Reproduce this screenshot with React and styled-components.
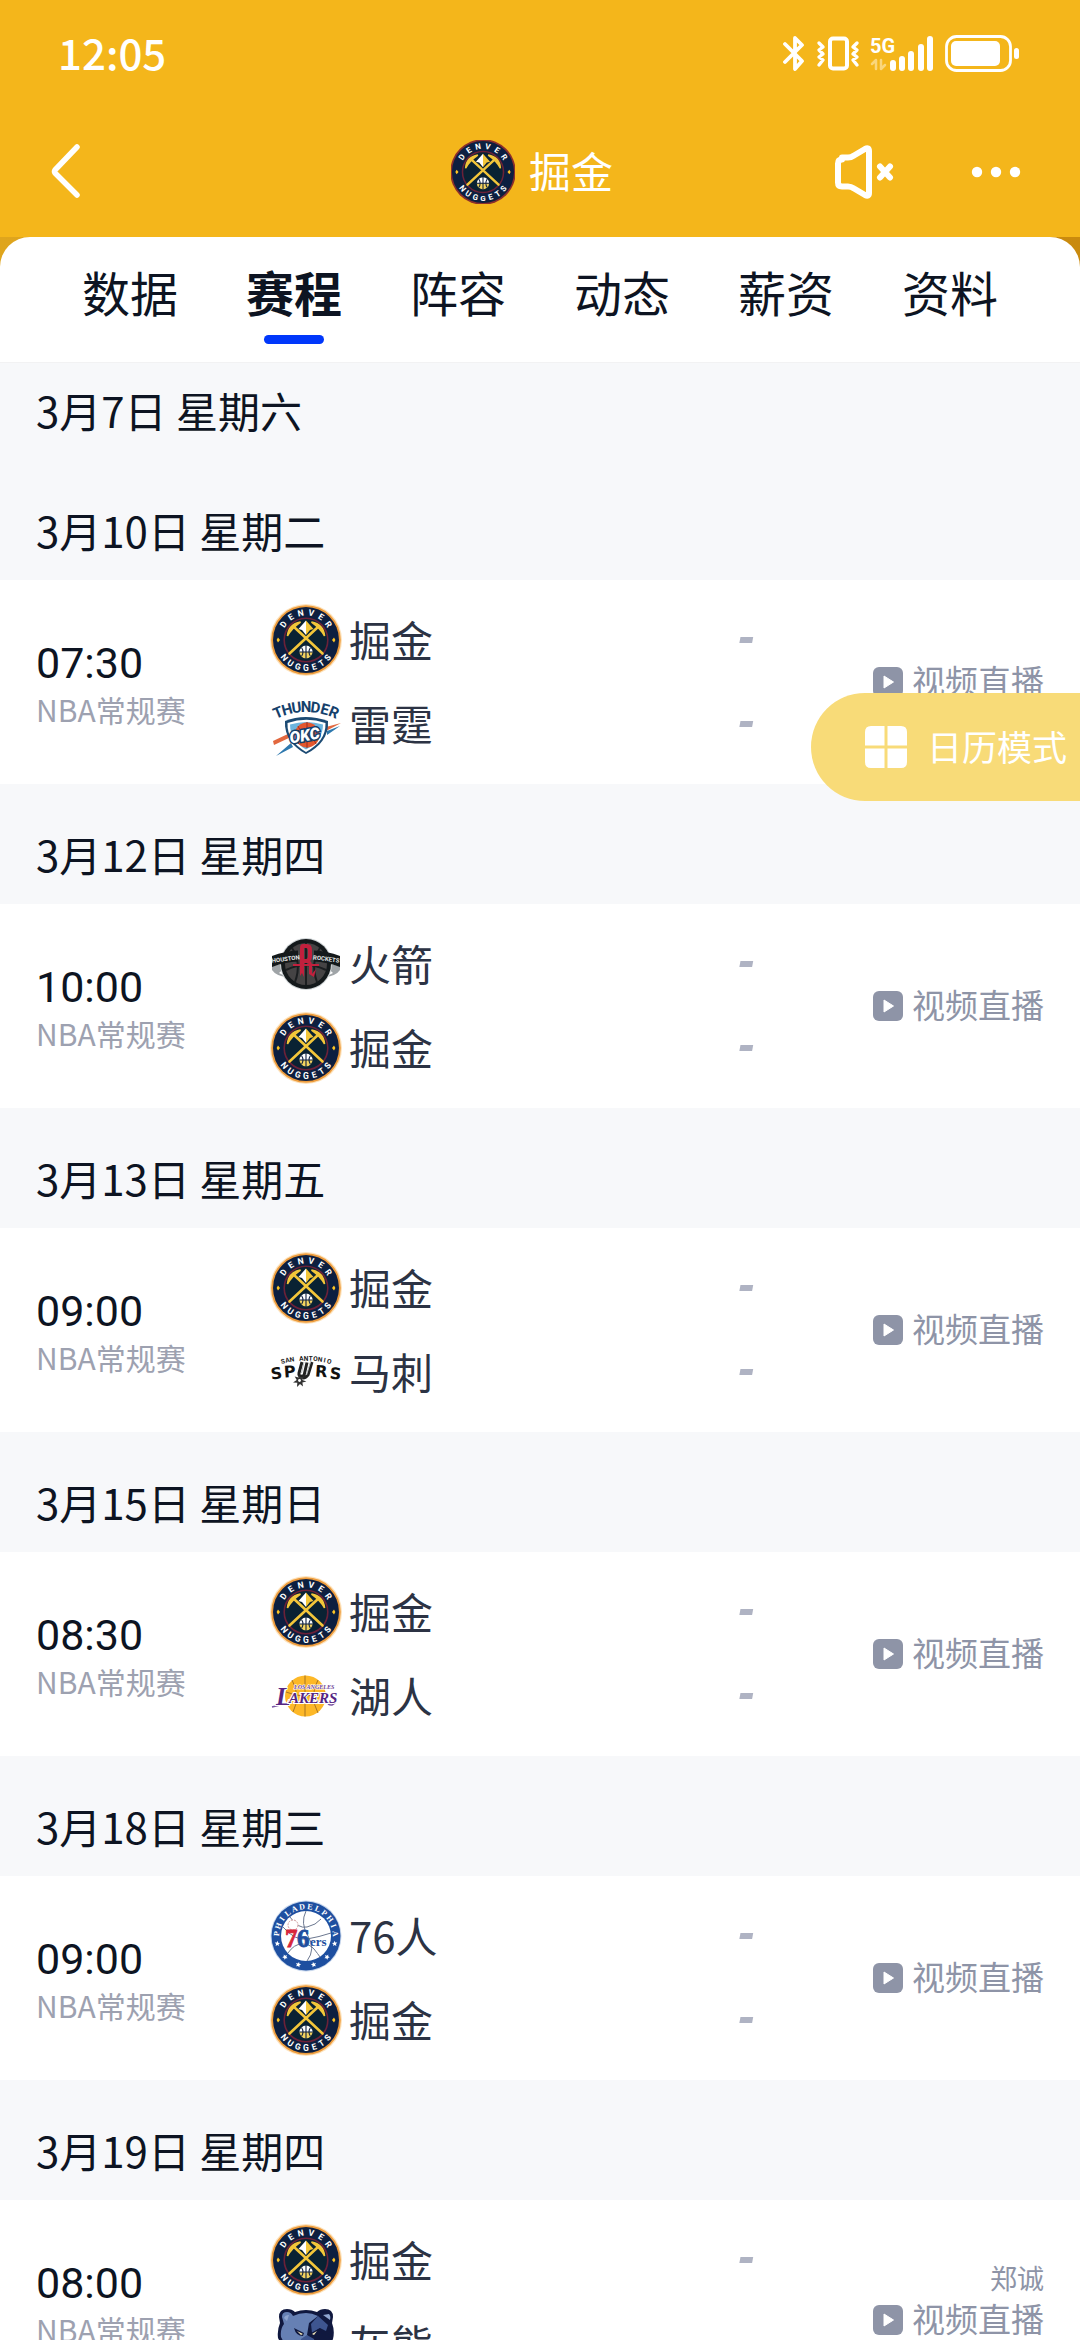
import * as React from "react";
import styled, { createGlobalStyle } from "styled-components";

const GlobalStyle = createGlobalStyle`
  * {
    box-sizing: border-box;
  }
  body {
    margin: 0;
    background: #f7f8fa;
    color: #0d1422;
    font-family: "Noto Sans CJK SC", "Noto Sans", sans-serif;
  }
  button {
    border: 0;
    padding: 0;
    background: none;
    color: inherit;
    font: inherit;
    cursor: pointer;
  }
  svg {
    display: block;
    flex-shrink: 0;
  }
`;

const Screen = styled.div`
  display: flex;
  flex-direction: column;
  height: 100vh;
  overflow: hidden;
`;

const Header = styled.header`
  background: #f4b61b;
  color: #fff;
`;

const StatusBar = styled.div`
  display: flex;
  align-items: center;
  justify-content: space-between;
  height: 106px;
  padding: 0 59px 0 58px;
  font-size: 42px;
  font-weight: 500;
`;

const NavBar = styled.div`
  display: grid;
  grid-template-columns: 1fr auto 1fr;
  align-items: center;
  height: 131px;
  padding: 0 54px 0 46px;
`;

const BackButton = styled.button`
  justify-self: start;
`;

const TeamTitle = styled.h1`
  display: flex;
  align-items: center;
  gap: 14px;
  margin: 0 8px 0 0;
  font-size: 42px;
  line-height: 60px;
  font-weight: 400;
`;

// CJK glyphs sit low in their line box, the padding brings them level with the icon beside
const Label = styled.span`
  padding-bottom: 4px;
`;

const NavActions = styled.div`
  display: flex;
  align-items: center;
  justify-self: end;
  gap: 72px;
`;

const SheetEdge = styled.div`
  background: linear-gradient(90deg, #dfa51d, #c98a0e);
`;

const Tabs = styled.nav`
  display: flex;
  height: 126px;
  padding: 18px 48px 0;
  background: #fff;
  border-bottom: 1px solid #f2f2f3;
  border-radius: 30px 30px 0 0;
`;

const Tab = styled.button`
  display: flex;
  flex: 1;
  flex-direction: column;
  align-items: center;
  gap: 8px;
  font-size: 48px;
  line-height: 72px;
  font-weight: ${(props) => (props.$active ? 700 : 400)};

  &::after {
    content: "";
    width: 60px;
    height: 9px;
    border-radius: 5px;
    background: ${(props) => (props.$active ? "#0037fb" : "transparent")};
  }
`;

const Schedule = styled.main`
  flex: 1;
  min-height: 0;
  overflow-y: auto;
  scrollbar-width: none;
`;

const DayTitle = styled.h2`
  height: 120px;
  margin: 0;
  padding: 40px 36px 0;
  font-size: 42px;
  line-height: 60px;
  font-weight: 400;

  &:first-child {
    height: 97px;
    padding-top: 17px;
  }
`;

const Match = styled.article`
  display: flex;
  align-items: center;
  min-height: 204px;
  padding: 18px 36px;
  background: #fff;
`;

const When = styled.div`
  width: 234px;
`;

const Time = styled.div`
  padding-top: 4px;
  font-family: Roboto, sans-serif;
  font-size: 43px;
  line-height: 50px;
`;

const League = styled.div`
  font-size: 30px;
  line-height: 42px;
  color: #9da1b0;
`;

const Teams = styled.div`
  flex: 1;
`;

const TeamRow = styled.div`
  display: flex;
  align-items: center;
  gap: 7px;
  height: 84px;
  font-size: 42px;
  color: #2c3344;
`;

const Score = styled.span`
  width: 16px;
  margin-left: auto;
  padding-bottom: 8px;
  font-family: "Liberation Sans", sans-serif;
  font-size: 50px;
  font-style: italic;
  font-weight: 700;
  color: #afb3c3;
`;

const Live = styled.div`
  display: flex;
  flex-direction: column;
  align-items: flex-end;
  width: 290px;
  color: #8e94a7;
`;

const Caster = styled.span`
  font-size: 27px;
  line-height: 36px;
`;

const LiveLink = styled.a`
  display: flex;
  align-items: center;
  gap: 9px;
  height: 48px;
  font-size: 33px;
  line-height: 48px;
  color: inherit;
  text-decoration: none;
`;

const CalendarButton = styled.button`
  position: fixed;
  top: 693px;
  right: 0;
  display: flex;
  align-items: center;
  gap: 20px;
  height: 108px;
  padding: 0 13px 0 54px;
  border-radius: 54px 0 0 54px;
  background: #f8db78;
  color: #fff;
  font-size: 35px;
`;

// Spreads letters round a circle, `step` degrees apart and centred on the top or the bottom
const ArcText = ({ text, cx, cy, r, step, bottom, ...rest }) => (
  <g textAnchor="middle" {...rest}>
    {text.split("").map((char, i) => {
      const angle = (i - (text.length - 1) / 2) * step * (bottom ? -1 : 1);
      return (
        <text key={i} x={cx} y={bottom ? cy + r : cy - r} transform={`rotate(${angle} ${cx} ${cy})`}>
          {char}
        </text>
      );
    })}
  </g>
);

const Nuggets = ({ size = 72, halo = true }) => (
  <svg width={size} height={size} viewBox={halo ? "0 0 72 72" : "2 2 68 68"}>
    {halo && <circle cx="36" cy="36" r="36" fill="#fde3bd" />}
    <circle cx="36" cy="36" r="34.8" fill={halo ? "#ee9c3c" : "#8c2f2c"} />
    <circle cx="36" cy="36" r="33" fill="#0d1f40" />
    <circle cx="36" cy="36" r="21.8" fill="#0a2233" stroke="#6b2138" strokeWidth="1.6" />
    <ArcText text="DENVER" cx={36} cy={36} r={24.6} step={22} fill="#fff" fontSize="8.5" fontWeight="700" fontFamily="Roboto, sans-serif" />
    <ArcText text="NUGGETS" cx={36} cy={36} r={30.8} step={17} bottom fill="#fff" fontSize="8.5" fontWeight="700" fontFamily="Roboto, sans-serif" />
    <path d="M8 33.5l2 2.5-2 2.5-1.4-2.5zM64 33.5l1.4 2.5-1.4 2.5-2-2.5z" fill="#fec524" />
    <path d="M23.5 22.5L52.5 49.5M48.5 22.5L19.5 49.5" fill="none" stroke="#f3c63a" strokeWidth="2.6" strokeLinecap="round" />
    <path d="M17.5 32c.5-7.500 5-12.500 13-14-5 3.500-10 7.500-13 14zM54.500 32c-.5-7.500-5-12.500-13-14 5 3.500 10 7.500 13 14z" fill="#f3c63a" stroke="#f3c63a" strokeWidth="1.6" />
    <path d="M36 16.500l-7.500 8.500 3.500 1 4 5z" fill="#fff" />
    <path d="M36 16.500l7.500 8.500-3.500 1-4 5z" fill="#f3c63a" />
    <path d="M29.500 48a6.500 6.500 0 0 1 13 0z" fill="#fff" />
    <path d="M29.500 48a6.500 6.500 0 0 0 13 0z" fill="#f3d35f" />
    <path d="M36 41v14M29.500 48h13M31.500 43.500q3 4.500 0 9M40.500 43.500q-3 4.500 0 9" fill="none" stroke="#0d1f40" strokeWidth="1.1" />
  </svg>
);

const Thunder = () => (
  <svg width="72" height="72" viewBox="0 0 72 72">
    <path d="M3 53l17-8 1 4-17 8zM56 39l15-4-15 8z" fill="#e2683f" />
    <path d="M6 68l15-13 2 4zM57 43l13-5-13 9z" fill="#2d78ae" />
    <path d="M15 33q20-8 43 0c1 15-8 26-22 33-13-7-22-18-21-33z" fill="#1b4a73" />
    <path d="M17.5 35q19-6.500 38 0c.5 13-7 22-19.500 29-12-7-19-16-18.500-29z" fill="#fff" />
    <path d="M20 36.500q16.500-5 33 0c0 11-6.500 19-17 25-10-6-16-14-16-25z" fill="#6cb4dd" />
    <circle cx="37" cy="47" r="12.500" fill="#e4572e" />
    <path d="M37 34v26M25 44q12-7 24 0M28 38q6 9 0 18M46 38q-6 9 0 18" fill="none" stroke="#9c2f1f" strokeWidth="1" />
    <text x="35" y="53" textAnchor="middle" fontFamily="Roboto, sans-serif" fontStyle="italic" fontWeight="900" fontSize="16" fill="#fff" stroke="#14406b" strokeWidth="3" paintOrder="stroke" transform="rotate(-10 35 50)">
      OKC
    </text>
    <ArcText text="THUNDER" cx={36} cy={91} r={67} step={7.6} fill="#14406b" fontSize="15" fontWeight="700" fontFamily="Roboto, sans-serif" />
  </svg>
);

const Rockets = () => (
  <svg width="72" height="72" viewBox="0 0 72 72">
    <path d="M2 38q12-3 20-1l-4 4q-7 1-9 4l8 4q-11-1-15-7zM70 38q-12-3-20-1l4 4q7 1 9 4l-8 4q11-1 15-7z" fill="#9fa4a7" />
    <circle cx="36" cy="36" r="26" fill="#cfd4d6" />
    <circle cx="36" cy="36" r="25" fill="#14191b" />
    <circle cx="36" cy="36" r="21" fill="#454344" />
    <path d="M36 15v42M16 42q20-10 40 0M22 20q10 15 3 34M50 20q-10 15-3 34" fill="none" stroke="#1b1e20" strokeWidth="2" />
    <path d="M2 28q13-5 26-5.500v11q-13 .5-26 5.500zM70 28q-13-5-26-5.500v11q13 .5 26 5.500z" fill="#14191b" />
    <g fill="#e7e9ea" fontFamily="Roboto, sans-serif" fontSize="6" fontWeight="700" textAnchor="middle">
      <text x="16" y="33" transform="rotate(-7 16 33)">HOUSTON</text>
      <text x="56" y="33" transform="rotate(7 56 33)">ROCKETS</text>
    </g>
    <path d="M30 48V20q0-4 3-4h4q5 0 5 6v6q0 4-2 5 2 1 2 5v8l4-5-2 8-5-3V38q0-3-2-3h-3v14l-2-4zM34 20v11h2q2 0 2-3v-5q0-3-2-3z" fill="#c2203d" fillRule="evenodd" />
    <path d="M23 37h26" stroke="#c2203d" strokeWidth="2" />
  </svg>
);

const Spurs = () => (
  <svg width="72" height="72" viewBox="0 0 72 72">
    <ArcText text="SAN ANTONIO" cx={36} cy={112} r={87.5} step={3} fill="#222" fontSize="6.500" fontWeight="700" fontFamily="Roboto, sans-serif" />
    <g fill="#111" fontFamily="DejaVu Sans, sans-serif" fontSize="16" fontWeight="700" textAnchor="middle">
      <text x="7" y="43" transform="rotate(-6 7 43)">S</text>
      <text x="20" y="41" transform="rotate(-4 20 41)">P</text>
      <text x="51" y="41" transform="rotate(4 51 41)">R</text>
      <text x="65" y="43" transform="rotate(6 65 43)">S</text>
    </g>
    <path d="M32 26l-3 11q-.5 3 2 3.500l3-1 3-13M42 26l-4 13q-2 3-5 3" fill="none" stroke="#222" strokeWidth="3" />
    <path d="M34 26l-2.500 11M40.500 26l-4 13" stroke="#b9bdbf" strokeWidth="1" />
    <path d="M29 38l1.400 4 3.600-2-1.600 4 4 1.400-4 1.200.6 4-3-2.600-3 3 .3-4.300-4.300-.3 3.700-2.400-2-3.600 3.800 1z" fill="#333" />
    <circle cx="29.500" cy="44.500" r="1.400" fill="#fff" />
  </svg>
);

const Lakers = () => (
  <svg width="72" height="72" viewBox="0 0 72 72">
    <circle cx="35.500" cy="36" r="20.500" fill="#fdb827" />
    <path d="M35 15.500v41M16 32q19 8 39 0M22 20q9 16 1 32M48 20q-9 16 0 33" fill="none" stroke="#a87423" strokeWidth="1" />
    <path d="M2 47L14 44M58 44q5 3 8-3" fill="none" stroke="#7c57a4" strokeWidth="1.500" />
    <g fontFamily="Liberation Serif, serif" fontStyle="italic" fontWeight="700" stroke="#fff" paintOrder="stroke">
      <text x="24" y="29" fontSize="6" fill="#6a3d95" strokeWidth="1">LOS ANGELES</text>
      <text x="6" y="45" fontSize="25" fill="#552583" strokeWidth="2">L</text>
      <text x="19" y="43" fontSize="15" fill="#552583" strokeWidth="2">AKERS</text>
    </g>
  </svg>
);

const STAR = "M0-2.600l.8 1.700 1.900.2-1.400 1.200.4 1.900L0 1.500l-1.700.9.4-1.900-1.400-1.200 1.900-.2z";

const Sixers = () => (
  <svg width="72" height="72" viewBox="0 0 72 72">
    <circle cx="36" cy="36" r="35.500" fill="#c7d6ec" />
    <circle cx="36" cy="36" r="34.500" fill="#1e4fa0" />
    <circle cx="36" cy="36" r="25" fill="#fff" />
    <path d="M36 11q-6 12 2 25t-1 25M13 27q12 14 24 12t24-6M20 17q8 12 17 10t14-8M18 53q6-9 14-9t12 5 6 8" fill="none" stroke="#6c7890" strokeWidth="1" />
    <ArcText text="PHILADELPHIA" cx={36} cy={36} r={26.8} step={15.5} fill="#fff" fontSize="8" fontWeight="700" fontFamily="Liberation Serif, serif" />
    {[-75, -45, -15, 15, 45, 75].map((angle) => (
      <path key={angle} d={STAR} fill="#fff" transform={`rotate(${angle} 36 36) translate(36 65.500)`} />
    ))}
    <circle cx="23" cy="25" r="5" fill="#fff" stroke="#c99" strokeWidth="1" strokeDasharray="2 1" />
    <g fontFamily="Liberation Serif, serif" fontWeight="700">
      <text x="15" y="47" fontSize="25" fill="#d8263b" stroke="#d8263b" strokeWidth=".8">7</text>
      <text x="27" y="47" fontSize="25" fill="#1e4fa0" stroke="#1e4fa0" strokeWidth=".8">6</text>
      <text x="40" y="46" fontSize="13" fill="#1e4fa0">ers</text>
    </g>
  </svg>
);

const Grizzlies = () => (
  <svg width="72" height="72" viewBox="0 0 72 72">
    <path d="M9 9Q9 1 17 1q5 0 8 3 11-4 22 0 3-3 8-3 8 0 8 8l-1 6q3 8 1 16l-8 18-12 16H29L17 48 8 30q-1-8 2-15z" fill="#10183f" />
    <path d="M12 9q0-5 5-5 4 0 6 4 6-3 13-3 6 0 12 3l-9 7-2 12 7 10-7 22h-6L20 46l-9-17q-1-8 3-13z" fill="#6680b4" />
    <path d="M48 8l-7 8 1 9 8-5 6 3 2-6z" fill="#3e5590" />
    <path d="M14 10q1-3 5-3l-2 6zM53 7l6-1q2 2 1 6z" fill="#8fa5cf" />
    <path d="M24 20l10 5-1 3q-7 0-9-8zM50 20l-9 5 1 3q6 0 8-8z" fill="#10183f" />
    <path d="M27 23l6 3-2 1zM47 23l-5 3 2 1z" fill="#f5e9bc" />
    <path d="M31 31l6-4 7 4 3 15-10 6-9-6z" fill="#3e5590" />
    <path d="M32 43h12l-6 7z" fill="#10183f" />
  </svg>
);

const teams = {
  nuggets: { name: "掘金", Logo: Nuggets },
  thunder: { name: "雷霆", Logo: Thunder },
  rockets: { name: "火箭", Logo: Rockets },
  spurs: { name: "马刺", Logo: Spurs },
  lakers: { name: "湖人", Logo: Lakers },
  sixers: { name: "76人", Logo: Sixers },
  grizzlies: { name: "灰熊", Logo: Grizzlies },
};

const tabs = ["数据", "赛程", "阵容", "动态", "薪资", "资料"];

const days = [
  { date: "3月7日 星期六" },
  { date: "3月10日 星期二", time: "07:30", sides: ["nuggets", "thunder"] },
  { date: "3月12日 星期四", time: "10:00", sides: ["rockets", "nuggets"] },
  { date: "3月13日 星期五", time: "09:00", sides: ["nuggets", "spurs"] },
  { date: "3月15日 星期日", time: "08:30", sides: ["nuggets", "lakers"] },
  { date: "3月18日 星期三", time: "09:00", sides: ["sixers", "nuggets"] },
  { date: "3月19日 星期四", time: "08:00", sides: ["nuggets", "grizzlies"], caster: "郑诚" },
];

const StatusIcons = () => (
  <svg width="238" height="40" viewBox="0 0 238 40" fill="none" stroke="#fff" strokeLinecap="round" strokeLinejoin="round">
    <path d="M2 11l17 17-7 8V5l7 7L2 29" strokeWidth="3.800" />
    <rect x="47" y="5.500" width="17" height="30" rx="3" strokeWidth="4" />
    <path d="M36 10l4 4-4 3 4 4-4 3 4 3-4 5M74 10l-4 4 4 3-4 4 4 3-4 3 4 5" strokeWidth="3.400" />
    <g stroke="none" fill="#fff">
      <text x="87" y="20" fontFamily="Roboto, sans-serif" fontSize="20" fontWeight="700">5G</text>
      <rect x="107" y="27" width="6" height="11" rx="3" />
      <rect x="116" y="23" width="6" height="15" rx="3" />
      <rect x="125" y="18" width="6" height="20" rx="3" />
      <rect x="135" y="11" width="6" height="27" rx="3" />
      <rect x="144" y="3" width="6" height="35" rx="3" />
      <rect x="168" y="8" width="49" height="25" rx="5" />
      <rect x="231" y="15" width="5" height="11" rx="2.500" />
    </g>
    <path d="M93 36V27l-4 4M98 27v9l4-4" stroke="#fad67c" strokeWidth="2.500" />
    <rect x="163.500" y="3.500" width="64" height="34" rx="10" strokeWidth="2.800" />
  </svg>
);

const MuteIcon = () => (
  <svg width="60" height="54" viewBox="0 0 60 54" fill="none" stroke="#fff" strokeLinecap="round" strokeLinejoin="round">
    <path d="M8 12.500h6q3 0 6-2l11-6.500q4-2 4 2v42q0 4-4 2l-11-6.500q-3-2-6-2H8q-4 0-4-4v-19q0-4 4-4z" strokeWidth="6" />
    <path d="M46 21.500l10 11M56 21.500l-10 11" strokeWidth="6" />
  </svg>
);

const PlayIcon = () => (
  <svg width="30" height="30" viewBox="0 0 30 30">
    <rect width="30" height="30" rx="6" fill="#8e94a7" />
    <path d="M11 9l9.500 6-9.500 6z" fill="#fff" stroke="#fff" strokeWidth="1" strokeLinejoin="round" />
  </svg>
);

const App = () => (
  <Screen>
    <GlobalStyle />
    <Header>
      <StatusBar>
        <Label>12:05</Label>
        <StatusIcons />
      </StatusBar>
      <NavBar>
        <BackButton aria-label="返回">
          <svg width="40" height="60" viewBox="0 0 40 60" fill="none" stroke="#fff" strokeWidth="5.500" strokeLinecap="round" strokeLinejoin="round">
            <path d="M31 5L9 28q-1 1.500 0 3L31 53" />
          </svg>
        </BackButton>
        <TeamTitle>
          <Nuggets size={64} halo={false} />
          <Label>掘金</Label>
        </TeamTitle>
        <NavActions>
          <button aria-label="静音">
            <MuteIcon />
          </button>
          <button aria-label="更多">
            <svg width="60" height="20" viewBox="0 0 60 20" fill="#fff">
              <circle cx="11" cy="10" r="5.200" />
              <circle cx="30" cy="10" r="5.200" />
              <circle cx="49" cy="10" r="5.200" />
            </svg>
          </button>
        </NavActions>
      </NavBar>
    </Header>
    <SheetEdge>
      <Tabs>
        {tabs.map((tab) => (
          <Tab key={tab} $active={tab === "赛程"}>
            {tab}
          </Tab>
        ))}
      </Tabs>
    </SheetEdge>
    <Schedule>
      {days.map((day) => (
        <React.Fragment key={day.date}>
          <DayTitle>{day.date}</DayTitle>
          {day.sides && (
            <Match>
              <When>
                <Time>{day.time}</Time>
                <League>NBA常规赛</League>
              </When>
              <Teams>
                {day.sides.map((side) => {
                  const { name, Logo } = teams[side];
                  return (
                    <TeamRow key={side}>
                      <Logo />
                      <Label>{name}</Label>
                      <Score>-</Score>
                    </TeamRow>
                  );
                })}
              </Teams>
              <Live>
                {day.caster && <Caster>{day.caster}</Caster>}
                <LiveLink href="#live">
                  <PlayIcon />
                  <Label>视频直播</Label>
                </LiveLink>
              </Live>
            </Match>
          )}
        </React.Fragment>
      ))}
    </Schedule>
    <CalendarButton>
      <svg width="42" height="42" viewBox="0 0 42 42" fill="#fff">
        <path d="M6 0h13.500v19.500H0V6q0-6 6-6zM22.500 0H36q6 0 6 6v13.500H22.500zM0 22.500h19.500V42H6q-6 0-6-6zM22.500 22.500H42V36q0 6-6 6H22.500z" />
      </svg>
      <Label>日历模式</Label>
    </CalendarButton>
  </Screen>
);

export default App;
